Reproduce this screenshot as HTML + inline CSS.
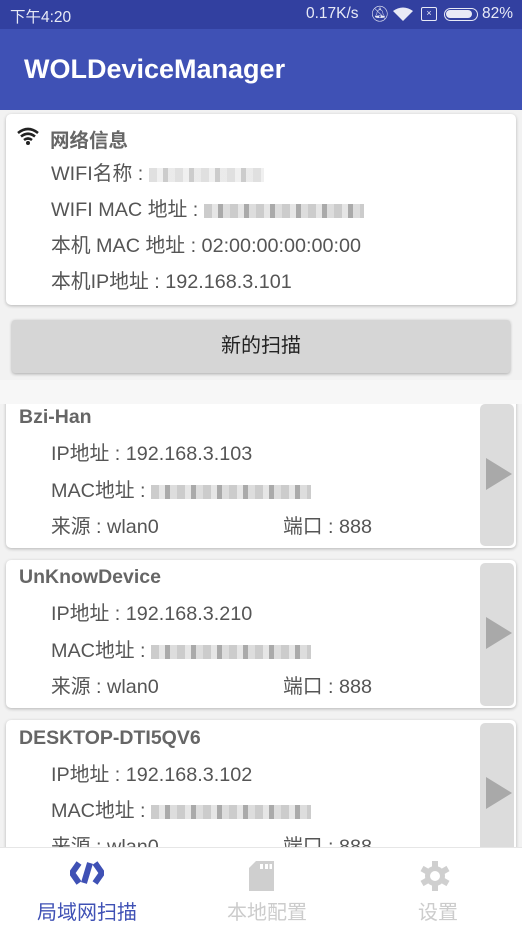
<!DOCTYPE html>
<html><head><meta charset="utf-8"><style>
*{margin:0;padding:0;box-sizing:border-box}
body{width:522px;height:928px;overflow:hidden;background:#f2f2f2;font-family:"Liberation Sans","Noto Sans CJK SC",sans-serif;position:relative;color:#555}
.sb{position:absolute;top:0;left:0;width:522px;height:29px;background:#3240a0;color:#e8eaf6;font-size:15.5px}
.ab{position:absolute;top:29px;left:0;width:522px;height:81px;background:#3f51b5;color:#fff;font-size:27px;font-weight:bold}
.card{position:absolute;background:#fff;border-radius:5px;box-shadow:0 1px 3px rgba(0,0,0,.25)}
.t{position:absolute;font-size:19.8px;color:#555;white-space:nowrap}
.h{position:absolute;font-size:19.5px;font-weight:bold;color:#666}
.blur{display:inline-block;height:14px;vertical-align:middle;background:repeating-linear-gradient(90deg,#ccc 0 8px,#e6e6e6 8px 14px,#aaa 14px 19px,#ddd 19px 26px)}
.side{position:absolute;right:8px;width:34px;background:#dcdcdc;border-radius:5px}
.tri{position:absolute;left:6px;width:0;height:0;border-left:26px solid #a9a9a9;border-top:16px solid transparent;border-bottom:16px solid transparent}
.nav{position:absolute;top:847px;left:0;width:522px;height:81px;background:#fff;border-top:1px solid #e6e6e6}
.nl{position:absolute;top:48px;font-size:20px;color:#ccc}
</style></head><body>
<div class="sb"><span style="position:absolute;left:10px;top:5px">下午4:20</span><span style="position:absolute;left:306px;top:5px">0.17K/s</span>
<span style="position:absolute;left:370px;top:5px">🔕︎</span>
<svg style="position:absolute;left:393px;top:7px" width="20" height="15" viewBox="0 0 20 15"><path d="M10 14L0 4Q10-3 20 4Z" fill="#e8eaf6"/></svg>
<div style="position:absolute;left:421px;top:7px;width:16px;height:14px;border:1.5px solid #e8eaf6;border-radius:2px;font-size:9px;text-align:center;line-height:11px">×</div>
<div style="position:absolute;left:444px;top:8px;width:34px;height:13px;border:1.5px solid #e8eaf6;border-radius:7px;padding:1px"><div style="width:26px;height:8px;background:#e8eaf6;border-radius:4px"></div></div>
<span style="position:absolute;left:482px;top:5px">82%</span></div>
<div class="ab"><span style="position:absolute;left:24px;top:25px">WOLDeviceManager</span></div>

<div class="card" style="left:6px;top:114px;width:510px;height:191px">
<svg style="position:absolute;left:10px;top:13px" width="24" height="18" viewBox="0 0 24 18"><path d="M2 6Q12-2 22 6M5 9.5Q12 4 19 9.5M8 13Q12 10 16 13" stroke="#222" stroke-width="2.6" fill="none"/><circle cx="12" cy="16" r="2" fill="#222"/></svg>
<div class="h" style="left:44px;top:10px">网络信息</div>
<div class="t" style="left:45px;top:43px">WIFI名称 : <span class="blur" style="width:115px;opacity:.6"></span></div>
<div class="t" style="left:45px;top:79px">WIFI MAC 地址 : <span class="blur" style="width:160px"></span></div>
<div class="t" style="left:45px;top:115px">本机 MAC 地址 : 02:00:00:00:00:00</div>
<div class="t" style="left:45px;top:151px">本机IP地址 : 192.168.3.101</div>
</div>
<div style="position:absolute;left:12px;top:320px;width:498px;height:53px;background:#d6d6d6;border-radius:3px;box-shadow:0 1px 3px rgba(0,0,0,.3);text-align:center;line-height:53px;font-size:20px;color:#222">新的扫描</div>

<div class="card" style="left:6px;top:395px;width:510px;height:153px;border-radius:0 0 5px 5px"></div>
<div style="position:absolute;left:0;top:380px;width:522px;height:24px;background:#f7f7f7"></div>
<div class="side" style="top:404px;height:142px"><div class="tri" style="top:54px"></div></div>
<div class="h" style="left:19px;top:406px">Bzi-Han</div>
<div class="t" style="left:51px;top:437px">IP地址 : 192.168.3.103</div>
<div class="t" style="left:51px;top:474px">MAC地址 : <span class="blur" style="width:160px"></span></div>
<div class="t" style="left:51px;top:510px">来源 : wlan0</div><div class="t" style="left:283px;top:510px">端口 : 888</div>

<div class="card" style="left:6px;top:560px;width:510px;height:148px"></div>
<div class="side" style="top:563px;height:143px"><div class="tri" style="top:54px"></div></div>
<div class="h" style="left:19px;top:566px">UnKnowDevice</div>
<div class="t" style="left:51px;top:597px">IP地址 : 192.168.3.210</div>
<div class="t" style="left:51px;top:634px">MAC地址 : <span class="blur" style="width:160px"></span></div>
<div class="t" style="left:51px;top:670px">来源 : wlan0</div><div class="t" style="left:283px;top:670px">端口 : 888</div>

<div class="card" style="left:6px;top:720px;width:510px;height:160px"></div>
<div class="side" style="top:723px;height:150px"><div class="tri" style="top:54px"></div></div>
<div class="h" style="left:19px;top:727px">DESKTOP-DTI5QV6</div>
<div class="t" style="left:51px;top:758px">IP地址 : 192.168.3.102</div>
<div class="t" style="left:51px;top:794px">MAC地址 : <span class="blur" style="width:160px"></span></div>
<div class="t" style="left:51px;top:830px">来源 : wlan0</div><div class="t" style="left:283px;top:830px">端口 : 888</div>

<div class="nav">
<svg style="position:absolute;left:70px;top:13px" width="34" height="24" viewBox="0 0 34 24"><path d="M9 2L2 12L9 22M25 2L32 12L25 22M20 2L14 22" stroke="#3f51b5" stroke-width="6" fill="none" stroke-linejoin="miter"/></svg>
<div class="nl" style="left:37px;color:#3f51b5">局域网扫描</div>
<svg style="position:absolute;left:249px;top:13px" width="25" height="30" viewBox="0 0 25 30"><path d="M7 0H25V30H0V7Z" fill="#cfcfcf"/><rect x="11" y="3" width="3" height="5" fill="#fff"/><rect x="16" y="3" width="3" height="5" fill="#fff"/><rect x="20.5" y="3" width="2.5" height="5" fill="#fff"/></svg>
<div class="nl" style="left:227px">本地配置</div>
<svg style="position:absolute;left:420px;top:13px" width="30" height="30" viewBox="0 0 30 30"><g fill="#cfcfcf"><circle cx="15" cy="15" r="10"/><rect x="12" y="0" width="6" height="30"/><rect x="12" y="0" width="6" height="30" transform="rotate(60 15 15)"/><rect x="12" y="0" width="6" height="30" transform="rotate(120 15 15)"/></g><circle cx="15" cy="15" r="5" fill="#fff"/></svg>
<div class="nl" style="left:418px">设置</div>
</div>
</body></html>
